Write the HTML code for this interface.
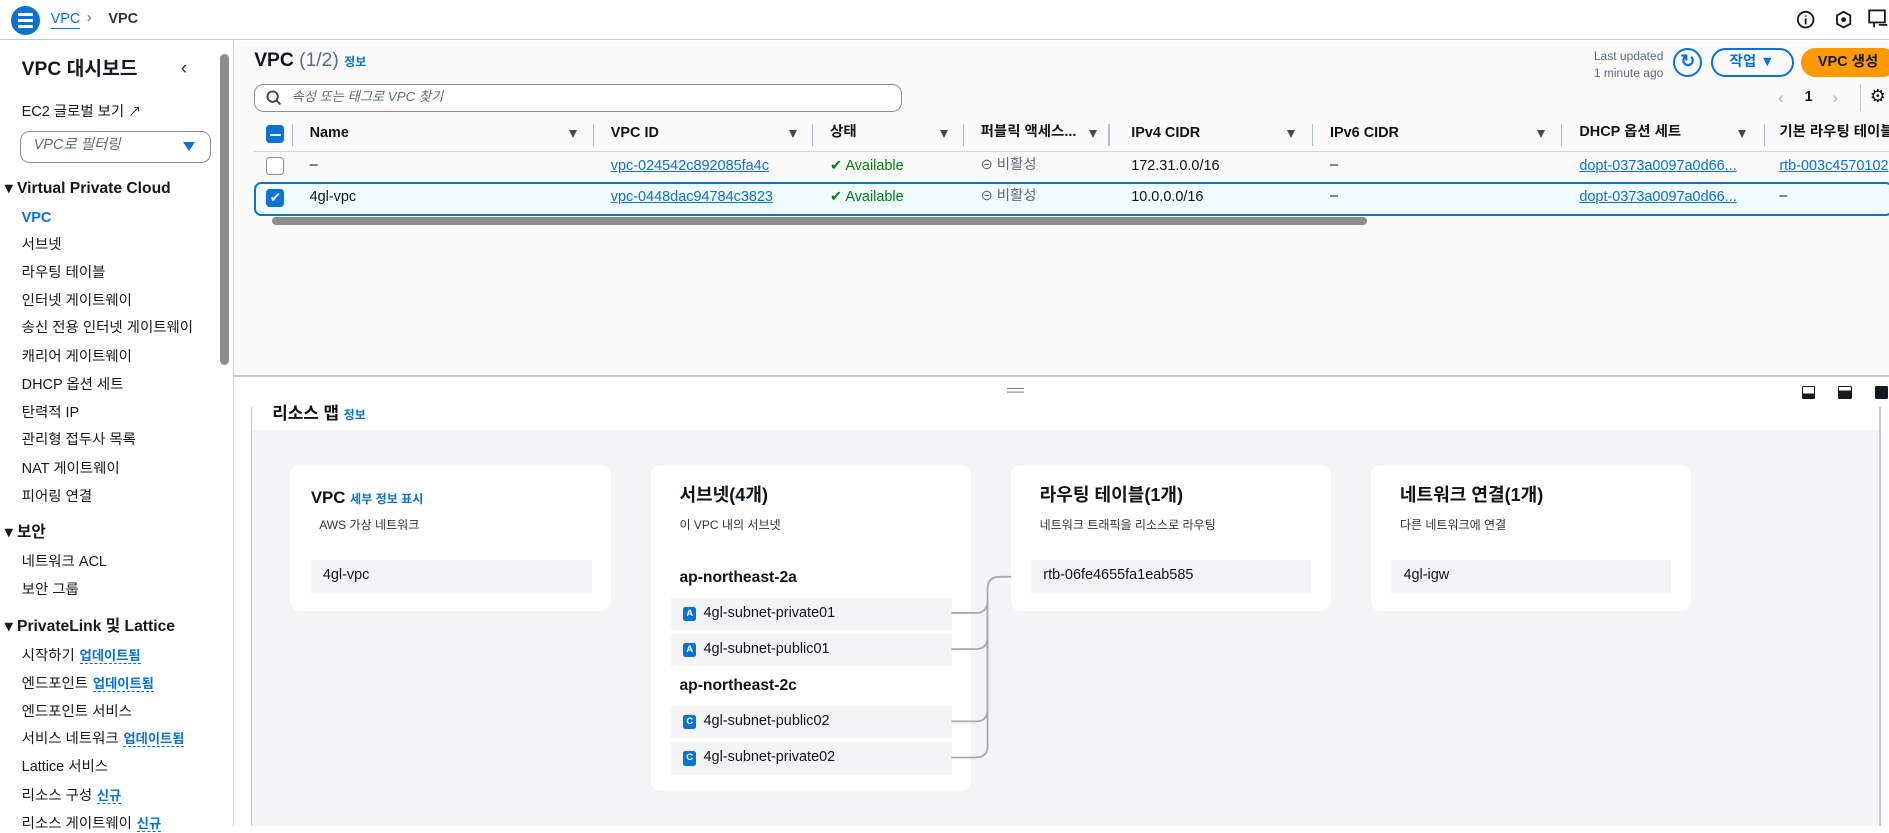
<!DOCTYPE html>
<html><head><meta charset="utf-8">
<style>
html{zoom:1.2047}
*{box-sizing:border-box;margin:0;padding:0}
body{width:1568px;height:686px;overflow:hidden;position:relative;background:#fff;font-family:"Liberation Sans","Noto Sans CJK KR",sans-serif;color:#0f141a;font-size:12px;line-height:1.2}
.a{position:absolute;white-space:nowrap}
.lk{color:#0972d3}
.u{text-decoration:underline}
.b{font-weight:bold}
.side div{position:absolute;left:18px;white-space:nowrap;font-size:12px;color:#16191f}
.side .h{left:4px;font-weight:bold;font-size:13px}
.new{color:#0972d3;font-weight:bold;font-size:11px;border-bottom:1px dashed #0972d3;margin-left:4px}
.th{position:absolute;top:104px;font-weight:bold;font-size:12px;white-space:nowrap;overflow:hidden}
.sep{position:absolute;top:103px;width:1px;height:18px;background:#b6bec9}
.tri{position:absolute;top:108px;width:0;height:0;border-left:4px solid transparent;border-right:4px solid transparent;border-top:7px solid #424650}
.card{position:absolute;background:#fff;border-radius:8px}
.item{position:absolute;background:#f4f4f6;height:25px;font-size:12px;padding:6px 10px;white-space:nowrap}
.az{display:inline-block;width:11px;height:12px;background:#0972d3;color:#fff;font-size:8px;text-align:center;line-height:12px;border-radius:2px;margin-right:6px;vertical-align:1px;font-weight:bold}
</style></head><body>
<div class="a" style="left:0;top:0;width:1568px;height:33px;border-bottom:1px solid #c6c6cd;background:#fff"></div>
<div class="a" style="left:9px;top:5px;width:24px;height:24px;border-radius:50%;background:#0972d3"></div>
<div class="a" style="left:15px;top:11px;width:12px;height:2px;background:#fff;box-shadow:0 5px 0 #fff,0 10px 0 #fff"></div>
<div class="a lk" style="left:42px;top:9px;font-size:12px;border-bottom:1px solid #0972d3">VPC</div>
<div class="a" style="left:72px;top:8px;color:#666">&#x203A;</div>
<div class="a b" style="left:90px;top:9px;font-size:12px;color:#333">VPC</div>
<svg class="a" style="left:1491px;top:8px" width="16" height="16"><circle cx="8" cy="8" r="6.5" fill="none" stroke="#16191f" stroke-width="1.5"/><path d="M8 7v5M8 4.5v1" stroke="#16191f" stroke-width="1.5"/></svg>
<svg class="a" style="left:1522px;top:8px" width="16" height="16"><path d="M8 1.5l5.5 3v7L8 14.5 2.5 11.5v-7z" fill="none" stroke="#16191f" stroke-width="1.5"/><circle cx="8" cy="8" r="2" fill="#16191f"/></svg>
<svg class="a" style="left:1551px;top:7px" width="17" height="17"><rect x="1" y="2" width="13" height="10" fill="none" stroke="#16191f" stroke-width="1.5"/><path d="M5 12v4M9 14h7" stroke="#16191f" stroke-width="1.5"/></svg>

<div class="side">
<div style="top:48px;font-size:16px;font-weight:bold">VPC 대시보드</div>
<div style="left:150px;top:47px;font-size:16px;color:#333">&#x2039;</div>
<div style="top:86px">EC2 글로벌 보기 <span style="font-size:11px">&#x2197;</span></div>
</div>
<div class="a" style="left:17px;top:109px;width:158px;height:26px;border:1px solid #8c8c94;border-radius:8px"></div>
<div class="a" style="left:28px;top:114px;font-style:italic;color:#5f6b7a;font-size:12px">VPC로 필터링</div>
<div class="a" style="left:152px;top:118px;border-left:5px solid transparent;border-right:5px solid transparent;border-top:8px solid #0972d3"></div>
<div class="side">
<div class="h" style="top:149px">▾ Virtual Private Cloud</div>
<div style="top:174px;color:#0972d3;font-weight:bold">VPC</div>
<div style="top:197px">서브넷</div>
<div style="top:220px">라우팅 테이블</div>
<div style="top:243px">인터넷 게이트웨이</div>
<div style="top:266px">송신 전용 인터넷 게이트웨이</div>
<div style="top:290px">캐리어 게이트웨이</div>
<div style="top:313px">DHCP 옵션 세트</div>
<div style="top:336px">탄력적 IP</div>
<div style="top:359px">관리형 접두사 목록</div>
<div style="top:383px">NAT 게이트웨이</div>
<div style="top:406px">피어링 연결</div>
<div class="h" style="top:435px">▾ 보안</div>
<div style="top:460px">네트워크 ACL</div>
<div style="top:483px">보안 그룹</div>
<div class="h" style="top:513px">▾ PrivateLink 및 Lattice</div>
<div style="top:538px">시작하기<span class="new">업데이트됨</span></div>
<div style="top:561px">엔드포인트<span class="new">업데이트됨</span></div>
<div style="top:584px">엔드포인트 서비스</div>
<div style="top:607px">서비스 네트워크<span class="new">업데이트됨</span></div>
<div style="top:630px">Lattice 서비스</div>
<div style="top:654px">리소스 구성<span class="new">신규</span></div>
<div style="top:677px">리소스 게이트웨이<span class="new">신규</span></div>
</div>
<div class="a" style="left:183px;top:45px;width:7px;height:258px;background:#8d8d8d;border-radius:4px"></div>
<div class="a" style="left:193px;top:33px;width:1px;height:653px;background:#d5d5d8"></div>

<div class="a" style="left:194px;top:34px;width:1374px;height:277px;background:#fafafa"></div>
<div class="a" style="left:194px;top:311px;width:1374px;height:2px;background:#c6c6cd"></div>
<div class="a b" style="left:211px;top:41px;font-size:16px">VPC <span style="font-weight:normal;color:#5f6b7a">(1/2)</span> <span class="lk" style="font-size:10px">정보</span></div>
<div class="a" style="left:1323px;top:40px;font-size:10px;color:#5f6b7a;line-height:14px">Last updated<br>1 minute ago</div>
<div class="a" style="left:1389px;top:40px;width:24px;height:24px;border:2px solid #0972d3;border-radius:50%;color:#0972d3;font-size:15px;text-align:center;line-height:19px;font-weight:bold">&#x21BB;</div>
<div class="a b" style="left:1420px;top:40px;width:69px;height:24px;border:2px solid #0972d3;border-radius:12px;color:#0972d3;font-size:12px;padding:3px 0 0 14px">작업 ▼</div>
<div class="a b" style="left:1495px;top:40px;width:80px;height:24px;background:#ff9900;border-radius:12px;font-size:12px;padding:5px 0 0 14px">VPC 생성</div>
<div class="a" style="left:1476px;top:73px;color:#aaa;font-size:14px">&#x2039;</div>
<div class="a b" style="left:1498px;top:74px;font-size:12px">1</div>
<div class="a" style="left:1521px;top:73px;color:#aaa;font-size:14px">&#x203A;</div>
<div class="a" style="left:1544px;top:70px;width:1px;height:22px;background:#ccc"></div>
<div class="a" style="left:1552px;top:71px;font-size:15px">&#x2699;</div>
<div class="a" style="left:211px;top:70px;width:538px;height:23px;border:1px solid #8c8c94;border-radius:8px;background:#fff"></div>
<svg class="a" style="left:221px;top:75px" width="13" height="13"><circle cx="5.5" cy="5.5" r="4.3" fill="none" stroke="#424650" stroke-width="1.6"/><path d="M8.7 8.7l3.3 3.3" stroke="#424650" stroke-width="1.6"/></svg>
<div class="a" style="left:242px;top:74px;font-style:italic;color:#5f6b7a;font-size:11px">속성 또는 태그로 VPC 찾기</div>
<div class="a" style="left:221px;top:104px;width:15px;height:15px;background:#0972d3;border-radius:3px"></div>
<div class="a" style="left:224px;top:111px;width:9px;height:2px;background:#fff"></div>
<div class="sep" style="left:242px"></div>
<div class="th" style="left:257px">Name</div><div class="tri" style="left:472px"></div><div class="sep" style="left:492px"></div>
<div class="th" style="left:507px">VPC ID</div><div class="tri" style="left:655px"></div><div class="sep" style="left:674px"></div>
<div class="th" style="left:689px;top:103px">상태</div><div class="tri" style="left:780px"></div><div class="sep" style="left:799px"></div>
<div class="th" style="left:814px;top:103px">퍼블릭 액세스...</div><div class="tri" style="left:904px"></div><div class="sep" style="left:920px"></div>
<div class="th" style="left:939px">IPv4 CIDR</div><div class="tri" style="left:1068px"></div><div class="sep" style="left:1089px"></div>
<div class="th" style="left:1104px">IPv6 CIDR</div><div class="tri" style="left:1276px"></div><div class="sep" style="left:1296px"></div>
<div class="th" style="left:1311px;top:103px">DHCP 옵션 세트</div><div class="tri" style="left:1443px"></div><div class="sep" style="left:1464px"></div>
<div class="th" style="left:1477px;top:103px">기본 라우팅 테이블</div>
<div class="a" style="left:211px;top:125px;width:1357px;height:1px;background:#d5d5d8"></div>
<div class="a" style="left:221px;top:130px;width:15px;height:15px;border:1.5px solid #8c8c94;border-radius:3px;background:#fff"></div>
<div class="a" style="left:257px;top:130px">–</div>
<div class="a lk u" style="left:507px;top:131px">vpc-024542c892085fa4c</div>
<div class="a" style="left:689px;top:131px;color:#037f0c">&#x2714;&#xFE0E; Available</div>
<div class="a" style="left:814px;top:130px;color:#5f6b7a">&#x229D; 비활성</div>
<div class="a" style="left:939px;top:131px">172.31.0.0/16</div>
<div class="a" style="left:1104px;top:130px">–</div>
<div class="a lk u" style="left:1311px;top:131px">dopt-0373a0097a0d66...</div>
<div class="a lk u" style="left:1477px;top:131px">rtb-003c4570102</div>
<div class="a" style="left:211px;top:151px;width:1360px;height:28px;border:2px solid #0972d3;border-radius:6px;background:#f0fbff"></div>
<div class="a" style="left:221px;top:157px;width:15px;height:15px;background:#0972d3;border-radius:3px;color:#fff;font-size:11px;text-align:center;line-height:15px">&#x2714;&#xFE0E;</div>
<div class="a" style="left:257px;top:157px">4gl-vpc</div>
<div class="a lk u" style="left:507px;top:157px">vpc-0448dac94784c3823</div>
<div class="a" style="left:689px;top:157px;color:#037f0c">&#x2714;&#xFE0E; Available</div>
<div class="a" style="left:814px;top:156px;color:#5f6b7a">&#x229D; 비활성</div>
<div class="a" style="left:939px;top:157px">10.0.0.0/16</div>
<div class="a" style="left:1104px;top:156px">–</div>
<div class="a lk u" style="left:1311px;top:157px">dopt-0373a0097a0d66...</div>
<div class="a" style="left:1477px;top:156px">–</div>
<div class="a" style="left:226px;top:180px;width:909px;height:7px;background:#8d8d8d;border-radius:4px"></div>

<div class="a" style="left:836px;top:322px;width:14px;height:1px;background:#777;box-shadow:0 3px 0 #777"></div>
<div class="a" style="left:1496px;top:320px;width:11px;height:11px;border:1.5px solid #16191f;border-radius:1px;background:linear-gradient(#fff 60%,#16191f 60%)"></div>
<div class="a" style="left:1526px;top:320px;width:11px;height:11px;border:1.5px solid #16191f;border-radius:1px;background:linear-gradient(#fff 30%,#16191f 30%)"></div>
<div class="a" style="left:1556px;top:320px;width:11px;height:11px;border:1.5px solid #16191f;border-radius:1px;background:#16191f"></div>
<div class="a" style="left:208px;top:338px;width:1px;height:348px;background:#c6c6cd"></div>
<div class="a b" style="left:226px;top:335px;font-size:14px">리소스 맵 <span class="lk" style="font-size:10px">정보</span></div>
<div class="a" style="left:209px;top:357px;width:1351px;height:329px;background:#f4f4f6"></div>
<div class="a" style="left:1560px;top:338px;width:1px;height:348px;background:#c6c6cd"></div>

<div class="card" style="left:241px;top:386px;width:266px;height:121px"></div>
<div class="a b" style="left:258px;top:405px;font-size:14px">VPC <span class="lk" style="font-size:10px">세부 정보 표시</span></div>
<div class="a" style="left:265px;top:430px;font-size:10px;color:#333">AWS 가상 네트워크</div>
<div class="item" style="left:258px;top:465px;width:233px;height:27px">4gl-vpc</div>

<div class="card" style="left:540px;top:386px;width:266px;height:271px"></div>
<div class="a b" style="left:564px;top:403px;font-size:15px">서브넷(4개)</div>
<div class="a" style="left:564px;top:430px;font-size:10px;color:#333">이 VPC 내의 서브넷</div>
<div class="a b" style="left:564px;top:472px;font-size:13px">ap-northeast-2a</div>
<div class="item" style="left:557px;top:496px;width:233px;height:27px"><span class="az">A</span>4gl-subnet-private01</div>
<div class="item" style="left:557px;top:526px;width:233px;height:27px"><span class="az">A</span>4gl-subnet-public01</div>
<div class="a b" style="left:564px;top:562px;font-size:13px">ap-northeast-2c</div>
<div class="item" style="left:557px;top:586px;width:233px;height:27px"><span class="az">C</span>4gl-subnet-public02</div>
<div class="item" style="left:557px;top:616px;width:233px;height:27px"><span class="az">C</span>4gl-subnet-private02</div>

<svg class="a" style="left:788px;top:475px" width="70" height="160"><g fill="none" stroke="#a9a9b0" stroke-width="1.5"><path d="M2 34h20q10 0 10-10V14q0-10 10-10h14"/><path d="M2 64h20q10 0 10-10V24"/><path d="M2 124h20q10 0 10-10V24"/><path d="M2 154h20q10 0 10-10V24"/></g></svg>

<div class="card" style="left:839px;top:386px;width:266px;height:121px"></div>
<div class="a b" style="left:863px;top:403px;font-size:15px">라우팅 테이블(1개)</div>
<div class="a" style="left:863px;top:430px;font-size:10px;color:#333">네트워크 트래픽을 리소스로 라우팅</div>
<div class="item" style="left:856px;top:465px;width:232px;height:27px">rtb-06fe4655fa1eab585</div>

<div class="card" style="left:1138px;top:386px;width:266px;height:121px"></div>
<div class="a b" style="left:1162px;top:403px;font-size:15px">네트워크 연결(1개)</div>
<div class="a" style="left:1162px;top:430px;font-size:10px;color:#333">다른 네트워크에 연결</div>
<div class="item" style="left:1155px;top:465px;width:232px;height:27px">4gl-igw</div>
</body></html>
